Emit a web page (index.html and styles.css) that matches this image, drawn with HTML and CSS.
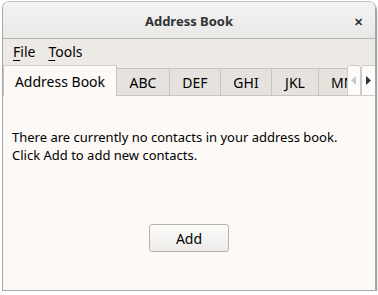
FILE: index.html
```html
<!DOCTYPE html>
<html lang="en">
<head>
    <meta charset="UTF-8">
    <title>Address Book</title>
    <link rel="stylesheet" href="styles.css">
</head>
<body>
    <div class="window">
        <div class="titlebar">
            <div class="title">Address Book</div>
            <div class="close">&#x2715;</div>
        </div>
        <div class="menubar">
            <span class="menu"><u>F</u>ile</span>
            <span class="menu"><u>T</u>ools</span>
        </div>
        <div class="tabs">
            <div class="tab active">Address Book</div>
            <div class="tab">ABC</div>
            <div class="tab">DEF</div>
            <div class="tab">GHI</div>
            <div class="tab">JKL</div>
            <div class="tab clipped"><span>MNO</span></div>
            <div class="scroll left">
                <svg width="6" height="9" viewBox="0 0 6 9"><path d="M5 0 L0 4.5 L5 9 Z" fill="#c9c7c4"/></svg>
            </div>
            <div class="scroll right">
                <svg width="6" height="9" viewBox="0 0 6 9"><path d="M0 0 L5 4.5 L0 9 Z" fill="#2e3436"/></svg>
            </div>
        </div>
        <div class="content">
            <div class="message">There are currently no contacts in your address book.<br>Click Add to add new contacts.</div>
            <button class="add-button">Add</button>
        </div>
    </div>
</body>
</html>
```
FILE: styles.css
```css
body {
    margin: 0;
    background: #ffffff;
    font-family: "Noto Sans", sans-serif;
    font-size: 13px;
    color: #2e3436;
}
.window {
    margin: 1px 2px 0 2px;
    width: 374px;
    height: 290px;
    border: 1px solid #a8a6a3;
    border-top-color: #c2c0bd;
    border-radius: 7px 7px 0 0;
    box-sizing: border-box;
    display: flex;
    flex-direction: column;
    overflow: hidden;
    box-shadow: 1px 2px 1px #9a9896;
}
.titlebar {
    height: 36px;
    flex-shrink: 0;
    background: linear-gradient(#f4f3f2, #e9e8e7);
    border-bottom: 1px solid #b4b2af;
    display: flex;
    align-items: center;
    justify-content: center;
    position: relative;
}
.title {
    font-weight: bold;
    font-size: 13px;
    color: #2e3436;
    padding-top: 2px;
}
.close {
    position: absolute;
    right: 12px;
    top: 12px;
    font-size: 11px;
    font-weight: bold;
    color: #2e3436;
}
.menubar {
    height: 25px;
    flex-shrink: 0;
    background: #ede9e5;
    display: flex;
    align-items: center;
    padding-left: 10px;
    gap: 13px;
    color: #000000;
    font-size: 14px;
}
.menu u {
    text-underline-offset: 3px;
}
.tabs {
    height: 32px;
    flex-shrink: 0;
    background: #ede9e5;
    display: flex;
    align-items: flex-end;
    border-bottom: 1px solid #d9d6d2;
    box-sizing: border-box;
}
.tab {
    flex-shrink: 0;
    height: 28px;
    box-sizing: border-box;
    background: #e6e3df;
    border: 1px solid #c8c5c1;
    border-left: none;
    display: flex;
    align-items: center;
    justify-content: center;
    color: #000000;
    font-size: 14px;
    width: 51px;
    margin-bottom: -1px;
}
.tab.active {
    height: 31px;
    background: #fcf9f6;
    border: 1px solid #c8c5c1;
    border-top-color: #d5d2ce;
    border-bottom: none;
    width: 114px;
    margin-bottom: -1px;
}
.tab:nth-child(2) {
    width: 53px;
}
.tab:nth-child(5) {
    width: 47px;
}
.tab.clipped {
    width: 28px;
    padding-left: 12px;
    justify-content: flex-start;
    overflow: hidden;
    border-right: none;
}
.scroll {
    flex-shrink: 0;
    height: 31px;
    width: 14px;
    box-sizing: border-box;
    background: #fdfcfb;
    border: 1px solid #cfccc8;
    border-radius: 3px 3px 0 0;
    display: flex;
    align-items: center;
    justify-content: center;
    margin-bottom: -1px;
}
.scroll.right {
    width: 16px;
}
.content {
    flex: 1;
    background: #fcf9f6;
    display: flex;
    flex-direction: column;
    align-items: center;
}
.message {
    align-self: flex-start;
    margin: 32px 0 0 9px;
    line-height: 18px;
    color: #000000;
}
.add-button {
    margin-top: 60px;
    width: 80px;
    height: 28px;
    font-family: "Noto Sans", sans-serif;
    font-size: 14px;
    color: #000000;
    background: linear-gradient(#fbfbfa, #eeecea);
    border: 1px solid #b6b3af;
    border-radius: 3px;
}
```
